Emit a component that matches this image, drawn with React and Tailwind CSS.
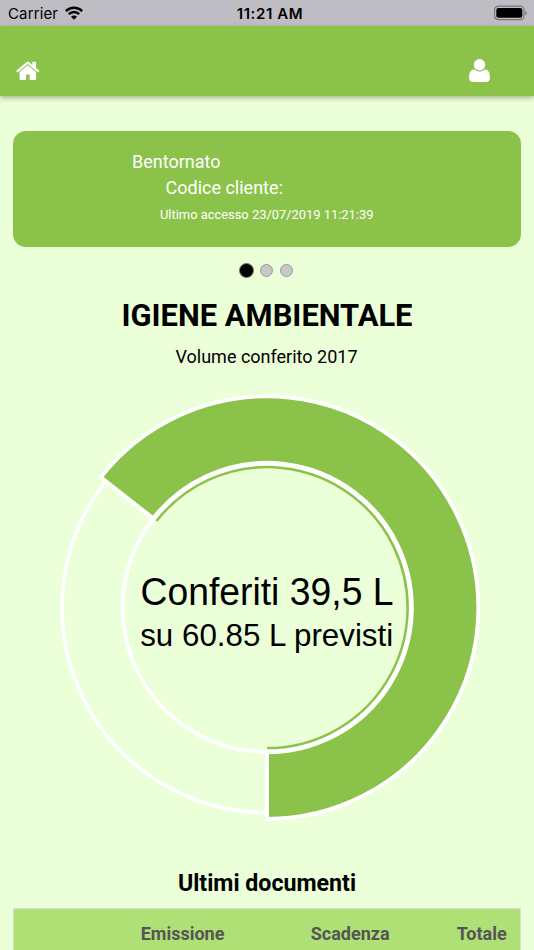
import React from "react";

const CX = 267.1;
const CY = 607.6;
const BOTTOM = Math.PI / 2;
const END = (218.1 * Math.PI) / 180;

// Point on the ring; angles run clockwise from the positive x axis.
function point(radius, angle) {
  return `${(CX + radius * Math.cos(angle)).toFixed(2)} ${(CY + radius * Math.sin(angle)).toFixed(2)}`;
}

// Arc over the filled share: from the bottom, through right and top.
function filledArc(radius) {
  return `M${point(radius, BOTTOM)}A${radius} ${radius} 0 1 0 ${point(radius, END)}`;
}

// Closed ring sector over the filled share.
function filledSector(inner, outer) {
  return `${filledArc(inner)}L${point(outer, END)}A${outer} ${outer} 0 1 1 ${point(outer, BOTTOM)}Z`;
}

// Closed ring sector over the remaining share.
function emptySector(inner, outer) {
  return `M${point(inner, BOTTOM)}A${inner} ${inner} 0 0 1 ${point(inner, END)}L${point(outer, END)}A${outer} ${outer} 0 0 0 ${point(outer, BOTTOM)}Z`;
}

function StatusBar() {
  return (
    <div className="grid h-[26px] grid-cols-3 items-center bg-[#bebdc3] pl-2 pr-[6px] pt-px font-[Inter,sans-serif] text-black">
      <div className="flex items-center gap-[7px]">
        <span className="text-[15px] leading-none tracking-[0.13px]">Carrier</span>
        <svg width="18" height="14" viewBox="0 0 18 14" className="-mt-[2px]" fill="none" stroke="#000" strokeWidth="2.5">
          <path d="M.8 5.1C5.3.5 12.7.5 17.2 5.1" />
          <path d="M3.8 8.2C6.7 5.2 11.3 5.2 14.2 8.2" />
          <path d="M6 10.7C7.7 9 10.3 9 12 10.7L9 13.7Z" fill="#000" stroke="none" />
        </svg>
      </div>
      <div className="pl-[4px] text-center text-[15px] font-semibold leading-none tracking-[0.6px] whitespace-nowrap">11:21 AM</div>
      <div className="flex justify-end">
        <svg width="34" height="16" viewBox="0 0 34 16" className="-mt-px">
          <rect x="0.5" y="1.2" width="29.5" height="13.4" rx="3.8" fill="none" stroke="#76757a" strokeWidth="1.2" />
          <rect x="2.3" y="3" width="26" height="9.8" rx="2" fill="#000" />
          <path d="M31.3 5.7c2 .8 2 3.6 0 4.4z" fill="#76757a" />
        </svg>
      </div>
    </div>
  );
}

function Header() {
  return (
    <header className="flex h-[70px] items-start justify-between bg-[#8bc34a] pl-[15px] pr-[44px] pt-[32px] shadow-[0_2px_5px_rgba(0,0,0,0.3)]">
      <svg width="25.6" height="25.6" viewBox="0 0 1792 1792" fill="#fff">
        <path d="M1472 992v480q0 26-19 45t-45 19h-384v-384h-256v384h-384q-26 0-45-19t-19-45v-480q0-1 .5-3t.5-3l575-474 575 474q1 2 1 6zm223-69l-62 74q-8 9-21 11h-3q-13 0-21-7l-692-577-692 577q-12 8-24 7-13-2-21-11l-62-74q-8-10-7-23.5t11-21.5l719-599q32-26 76-26t76 26l244 204v-195q0-14 9-23t23-9h192q14 0 23 9t9 23v408l219 182q10 8 11 21.5t-7 23.5z" />
      </svg>
      <svg width="21" height="23" viewBox="0 0 1408 1536" className="mt-px" fill="#fff">
        <path
          transform="matrix(1 0 0 -1 0 1408)"
          d="M1408 131q0 -120 -73 -189.5t-194 -69.5h-874q-121 0 -194 69.5t-73 189.5q0 53 3.5 103.5t14 109t26.5 108.5t43 97.5t62 81t85.5 53.5t111.5 20q9 0 42 -21.5t74.5 -48t108 -48t133.5 -21.5t133.5 21.5t108 48t74.5 48t42 21.5q61 0 111.5 -20t85.5 -53.5t62 -81t43 -97.5t26.5 -108.5t14 -109t3.5 -103.5zM1088 1024q0 -159 -112.5 -271.5t-271.5 -112.5t-271.5 112.5t-112.5 271.5t112.5 271.5t271.5 112.5t271.5 -112.5t112.5 -271.5z"
        />
      </svg>
    </header>
  );
}

function Donut() {
  return (
    <svg width="534" height="450" viewBox="0 380 534 450" className="block">
      <g fill="none" stroke="#fff">
        <path d={emptySector(144.4, 205)} strokeWidth="3.8" />
        <path d={filledArc(143.8)} strokeWidth="4.6" />
      </g>
      <path d={filledSector(144.8, 211.2)} fill="#8bc34a" stroke="#fff" strokeWidth="3.8" />
      <path d={filledArc(140.5)} fill="none" stroke="#8bc34a" strokeWidth="2.5" />
      <g fontFamily="Liberation Sans, Arial, sans-serif" textAnchor="middle" fill="#000">
        <text x="267" y="604.5" fontSize="37.9" textLength="253" lengthAdjust="spacingAndGlyphs">Conferiti 39,5 L</text>
        <text x="266.7" y="646.2" fontSize="31.3" textLength="253" lengthAdjust="spacingAndGlyphs">su 60.85 L previsti</text>
      </g>
    </svg>
  );
}

export default function App() {
  return (
    <div className="h-[950px] w-[534px] overflow-hidden bg-[#ebffd9] font-[Roboto,sans-serif] text-black">
      <StatusBar />
      <Header />
      <section className="mx-[13px] mt-[34.5px] flex h-[116px] flex-col rounded-[13px] bg-[#8bc34a] pt-[18.5px] text-white">
        <p className="pl-[119px] text-[18px] leading-[26px]">Bentornato</p>
        <p className="pl-[152.5px] text-[18px] leading-[26px]">Codice cliente:</p>
        <p className="pl-[147px] pt-[4px] text-[12.9px] leading-[20px]">Ultimo accesso 23/07/2019 11:21:39</p>
      </section>
      <div className="mt-[15.5px] flex h-4 items-center justify-center gap-[6px] pr-[2px]">
        <span className="size-[15px] rounded-full border border-[#777] bg-black" />
        <span className="size-[13px] rounded-full border border-[#999] bg-[#c8c8c8]" />
        <span className="ml-px size-[13px] rounded-full border border-[#999] bg-[#c8c8c8]" />
      </div>
      <h1 className="mt-[18px] text-center text-[30.9px] font-bold leading-[40px]">IGIENE AMBIENTALE</h1>
      <p className="mt-[9px] pr-px text-center text-[18px] leading-[24px]">Volume conferito 2017</p>
      <div className="mt-[11px]">
        <Donut />
      </div>
      <h2 className="mt-[38px] text-center text-[23.2px] font-bold leading-[30px]">Ultimi documenti</h2>
      <div className="mx-[13px] mt-[10px] grid h-[60px] grid-cols-[126px_170px_146px_1fr] border-[1.5px] border-[#d7dfd0] bg-[#afe075] pl-[0.7px] pt-[13px] text-[18px] font-bold leading-[24px] text-[#555]">
        <span />
        <span>Emissione</span>
        <span>Scadenza</span>
        <span>Totale</span>
      </div>
    </div>
  );
}
